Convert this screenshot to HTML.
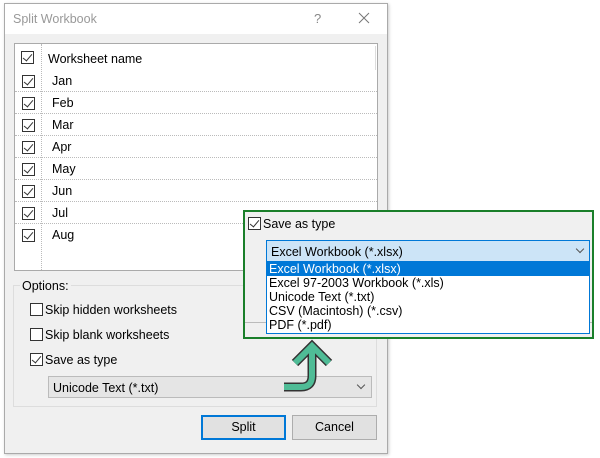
<!DOCTYPE html>
<html><head><style>
*{margin:0;padding:0;box-sizing:border-box}
body{width:600px;height:458px;background:#fff;position:relative;overflow:hidden;font-family:"Liberation Sans",sans-serif;font-size:12.5px;color:#000}
.abs{position:absolute}
.cb{position:absolute;width:13px;height:13px;border:1px solid #333;background:#fff}
.cb.on::after{content:"";position:absolute;left:3px;top:0px;width:4px;height:8px;border:solid #333;border-width:0 1.3px 1.3px 0;transform:rotate(40deg)}
.row{position:absolute;left:15px;width:362px;height:22px;border-bottom:1px dotted #bbb}
.row span{position:absolute;left:37px;top:4px}
.row .cb{left:7px;top:5px}
.chev{position:absolute;width:6px;height:6px;border:solid #555;border-width:0 1px 1px 0;transform:rotate(45deg)}
</style></head><body>
<div class="abs" style="left:4px;top:3px;width:384px;height:451px;border:1px solid #aaa;background:#f0f0f0;box-shadow:1px 1px 3px #ccc"></div>
<div class="abs" style="left:5px;top:4px;width:382px;height:30px;background:#fff"></div>
<div class="abs" style="left:13px;top:12px;color:#999">Split Workbook</div>
<div class="abs" style="left:314px;top:11px;color:#888;font-size:13px">?</div>
<svg class="abs" style="left:358px;top:12px" width="12" height="12"><path d="M1 1L11 11M11 1L1 11" stroke="#777" stroke-width="1"/></svg>
<div class="abs" style="left:14px;top:43px;width:364px;height:228px;border:1px solid #aaa;background:#fff"></div>
<div class="abs" style="left:41px;top:44px;width:0;height:226px;border-left:1px dotted #bbb"></div>
<div class="abs" style="left:375px;top:46px;width:1px;height:24px;background:#ddd"></div>
<div class="cb on" style="left:21px;top:51px"></div>
<div class="abs" style="left:48px;top:52px">Worksheet name</div>
<div class="row" style="top:70px"><div class="cb on"></div><span>Jan</span></div>
<div class="row" style="top:92px"><div class="cb on"></div><span>Feb</span></div>
<div class="row" style="top:114px"><div class="cb on"></div><span>Mar</span></div>
<div class="row" style="top:136px"><div class="cb on"></div><span>Apr</span></div>
<div class="row" style="top:158px"><div class="cb on"></div><span>May</span></div>
<div class="row" style="top:180px"><div class="cb on"></div><span>Jun</span></div>
<div class="row" style="top:202px"><div class="cb on"></div><span>Jul</span></div>
<div class="row" style="top:224px;border:none"><div class="cb on"></div><span>Aug</span></div>
<div class="abs" style="left:13px;top:285px;width:364px;height:122px;border:1px solid #ddd"></div>
<div class="abs" style="left:20px;top:279px;background:#f0f0f0;padding:0 2px">Options:</div>
<div class="cb" style="left:30px;top:303px"></div><div class="abs" style="left:45px;top:303px">Skip hidden worksheets</div>
<div class="cb" style="left:30px;top:328px"></div><div class="abs" style="left:45px;top:328px">Skip blank worksheets</div>
<div class="cb on" style="left:30px;top:353px"></div><div class="abs" style="left:45px;top:353px">Save as type</div>
<div class="abs" style="left:48px;top:376px;width:324px;height:22px;border:1px solid #bbb;background:#e5e5e5;padding:4px 4px">Unicode Text (*.txt)</div>
<div class="chev" style="left:358px;top:382px"></div>
<div class="abs" style="left:201px;top:415px;width:85px;height:25px;border:2px solid #0078d7;background:#e1e1e1;text-align:center;line-height:21px">Split</div>
<div class="abs" style="left:292px;top:415px;width:85px;height:25px;border:1px solid #adadad;background:#e1e1e1;text-align:center;line-height:23px">Cancel</div>

<div class="abs" style="left:243px;top:210px;width:351px;height:129px;border:2px solid #1a7f2a;background:#f0f0f0"></div>
<div class="abs" style="left:245px;top:322px;width:347px;height:1px;background:#bbb"></div>
<div class="cb on" style="left:248px;top:217px"></div>
<div class="abs" style="left:263px;top:217px">Save as type</div>
<div class="abs" style="left:266px;top:240px;width:324px;height:22px;border:1px solid #0078d7;background:#cce4f7;padding:4px 4px">Excel Workbook (*.xlsx)</div>
<div class="chev" style="left:577px;top:246px"></div>
<div class="abs" style="left:266px;top:261px;width:324px;height:73px;border:1px solid #0078d7;background:#fff;line-height:14px;padding-left:2px">
<div style="background:#0078d7;color:#fff;margin-left:-2px;padding-left:2px">Excel Workbook (*.xlsx)</div>
<div>Excel 97-2003 Workbook (*.xls)</div><div>Unicode Text (*.txt)</div><div>CSV (Macintosh) (*.csv)</div><div>PDF (*.pdf)</div></div>
<svg class="abs" style="left:0;top:0" width="600" height="458">
<g fill="none" stroke-linejoin="miter" stroke-linecap="butt">
<path d="M295 363 L312 346 L329 363 M312 348 L312 376 Q312 387 301 387 L284 387" stroke="#333" stroke-width="9"/>
<path d="M295 363 L312 346 L329 363 M312 348 L312 376 Q312 387 301 387 L284 387" stroke="#4fbc96" stroke-width="6"/>
</g></svg>
</body></html>
